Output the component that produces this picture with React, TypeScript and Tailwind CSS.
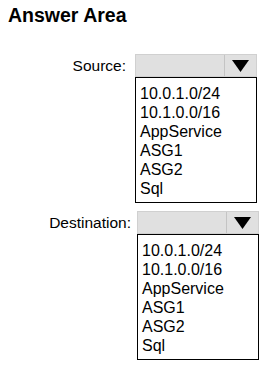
import React from 'react';

const options = ['10.0.1.0/24', '10.1.0.0/16', 'AppService', 'ASG1', 'ASG2', 'Sql'];

type RowProps = {
  label: string;
  labelWidth: string;
  gap: string;
};

const DropdownRow: React.FC<RowProps> = ({ label, labelWidth, gap }) => (
  <div className="flex items-start">
    <div className={`${labelWidth} h-[23px] flex items-center justify-end text-[15.5px] text-black`}>
      {label}
    </div>
    <div className={`${gap} w-[122px] flex flex-col`}>
      {/* closed select header */}
      <div className="h-[23px] flex bg-[#e0e0e0] border border-[#d0d0d0]">
        <div className="flex-1 border-r border-[#c4c4c4]" />
        <div className="w-[31px] flex items-center justify-center">
          <svg width="17" height="12" viewBox="0 0 17 12">
            <polygon points="0,0 17,0 8.5,12" fill="#000" />
          </svg>
        </div>
      </div>
      {/* open option list */}
      <div className="border border-black pt-[6px] pb-[4px] pl-[4px]">
        {options.map(opt => (
          <div key={opt} className="text-[16px] leading-[19px] text-black">
            {opt}
          </div>
        ))}
      </div>
    </div>
  </div>
);

const App: React.FC = () => {
  return (
    <div
      className="w-[266px] h-[365px] bg-white overflow-hidden"
      style={{ fontFamily: '"Liberation Sans", Arial, sans-serif' }}
    >
      <div className="pt-[4px] pl-[8px] text-[19.5px] leading-[23px] font-bold text-black">Answer Area</div>
      <div className="mt-[27px]">
        <DropdownRow label="Source:" labelWidth="w-[126px]" gap="ml-[9px]" />
      </div>
      <div className="mt-[8px]">
        <DropdownRow label="Destination:" labelWidth="w-[131px]" gap="ml-[6px]" />
      </div>
    </div>
  );
};

export default App;
